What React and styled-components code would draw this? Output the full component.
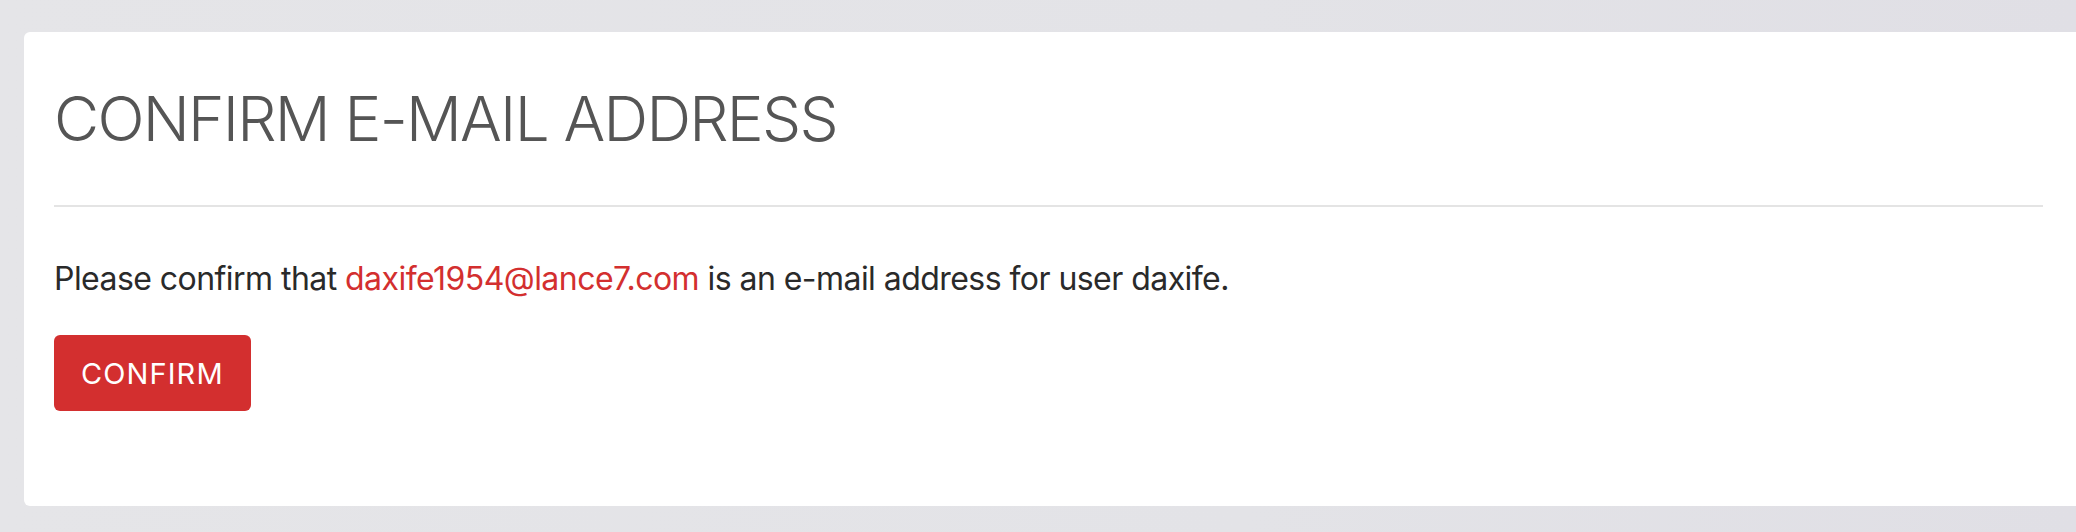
import React from "react";
import styled, { createGlobalStyle } from "styled-components";

const Global = createGlobalStyle`
  html, body {
    margin: 0;
    padding: 0;
    overflow: hidden;
  }
  body {
    width: 2076px;
    height: 532px;
    background: linear-gradient(90deg, #e5e5e8 0%, #e3e3e7 60%, #e0dfe5 100%);
    font-family: Inter, "Noto Sans", "Liberation Sans", sans-serif;
    color: #2b2b2b;
  }
`;

const Page = styled.main`
  display: flex;
  padding: 32px 0 0 24px;
  box-sizing: border-box;
  height: 532px;
`;

const Card = styled.section`
  background: #ffffff;
  border-radius: 6px;
  width: 2090px;
  flex: none;
  box-sizing: border-box;
  padding: 50px 0 95px 30px;
  height: 474px;
`;

const Inner = styled.div`
  width: 1989px;
  display: flex;
  flex-direction: column;
  align-items: flex-start;
`;

const Title = styled.h1`
  margin: 0;
  font-family: Inter, "Noto Sans", sans-serif;
  font-weight: 300;
  font-size: 62px;
  line-height: 74px;
  color: #555555;
  letter-spacing: -1.75px;
`;

const Divider = styled.hr`
  align-self: stretch;
  margin: 49px 0 0 0;
  border: none;
  height: 2px;
  background: #e4e4e4;
`;

const Message = styled.p`
  margin: 48px 0 0 0;
  font-size: 32px;
  line-height: 48px;
  color: #2a2a2a;
  letter-spacing: -0.55px;
`;

const Email = styled.a`
  color: #d32f2f;
  text-decoration: none;
`;

const Button = styled.button`
  margin-top: 32px;
  height: 76px;
  padding: 0 27px;
  display: flex;
  align-items: center;
  justify-content: center;
  background: #d32f2f;
  color: #ffffff;
  border: none;
  border-radius: 6px;
  font-family: Inter, "Noto Sans", sans-serif;
  font-size: 29px;
  font-weight: 400;
  letter-spacing: 1.1px;
  cursor: pointer;
`;

export default function App() {
  return (
    <>
      <Global />
      <Page>
        <Card>
          <Inner>
            <Title>CONFIRM E-MAIL ADDRESS</Title>
            <Divider />
            <Message>
              Please confirm that <Email href="#">daxife1954@lance7.com</Email> is an e-mail address for user daxife.
            </Message>
            <Button>CONFIRM</Button>
          </Inner>
        </Card>
      </Page>
    </>
  );
}
